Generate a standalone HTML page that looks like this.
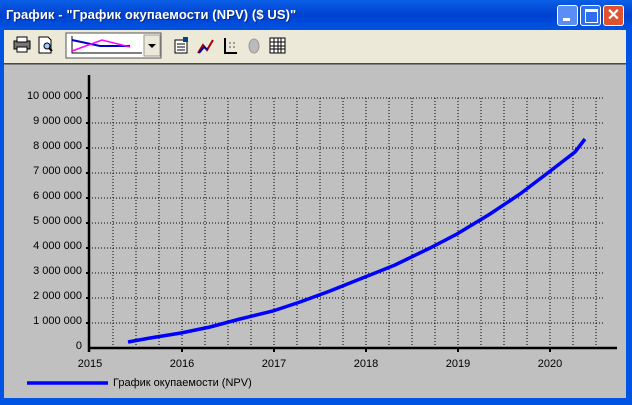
<!DOCTYPE html>
<html><head><meta charset="utf-8"><style>
body{margin:0;width:632px;height:405px;overflow:hidden;font-family:"Liberation Sans",sans-serif;background:#0A246A}
.win{position:absolute;left:0;top:0;width:632px;height:405px;background:linear-gradient(#0A5FE6,#0041D0 15px,#0054E3 30px);}
.title{position:absolute;left:6px;top:7px;color:#fff;font-weight:bold;font-size:13px;text-shadow:1px 1px 0 #0A2A80;letter-spacing:0.1px}
.btn{position:absolute;top:5px;width:21px;height:21px;border:1px solid #fff;border-radius:3px;background:#2E6FF0;box-sizing:border-box}
.tb{position:absolute;left:4px;top:30px;width:622px;height:33px;background:#ECE9D8}
.chart{position:absolute;left:4px;top:64px;width:622px;height:333px;background:#C0C0C0;border-top:1px solid #808080}
.yl{position:absolute;right:550px;font-size:11px;color:#000}
.xl{position:absolute;top:358px;font-size:11px;width:40px;text-align:center;margin-left:-20px}
</style></head><body>
<div class="win">
<div class="title">График - "График окупаемости (NPV) ($ US)"</div>
<div class="btn" style="left:557px;background:#5A8EF5"><div style="position:absolute;left:5px;top:12px;width:7px;height:3px;background:#fff"></div></div>
<div class="btn" style="left:580px"><div style="position:absolute;left:4px;top:3px;width:11px;height:10px;border:1px solid #fff;border-top-width:3px"></div></div>
<div class="btn" style="left:603px;background:#E0522E;color:#fff;font-size:16px;font-weight:bold;text-align:center;line-height:19px">✕</div>
<div class="tb"></div>
<svg width="632" height="64" style="position:absolute;left:0;top:0">
<g transform="translate(1,0)">
<rect x="13" y="41" width="16" height="8" fill="#777" stroke="#000"/><rect x="16" y="37" width="10" height="5" fill="#fff" stroke="#000"/><rect x="16" y="47" width="10" height="5" fill="#fff" stroke="#000"/>
</g>
<path d="M39 37h9l3 3v13h-12z" fill="#fff" stroke="#000"/><circle cx="47" cy="46" r="3" fill="#9cf" stroke="#000"/><path d="M49 48l3 3" stroke="#000" stroke-width="2"/>
<rect x="66" y="33" width="95" height="25" fill="#fff" stroke="#555"/>
<path d="M72 36v17h70" stroke="#000" fill="none"/><path d="M72 40l28 6h30" stroke="#00c" stroke-width="2" fill="none"/><path d="M72 51l30-11 28 7" stroke="#f0f" stroke-width="1.5" fill="none"/>
<rect x="144" y="35" width="16" height="21" fill="#ECE9D8" stroke="#999"/><path d="M148 44h8l-4 4z" fill="#000"/>
<rect x="175" y="40" width="12" height="13" fill="#fff" stroke="#000"/><path d="M177 44h8M177 47h8M177 50h8" stroke="#000"/><rect x="183" y="37" width="5" height="5" fill="#048"/>
<path d="M198 53l5-8 4 5 6-10" stroke="#a00" stroke-width="2" fill="none"/><path d="M199 53l5-6 4 3" stroke="#00a" stroke-width="2" fill="none"/>
<path d="M225 38v15h12" stroke="#000" stroke-width="2" fill="none"/><path d="M229 43h2M233 43h2M229 47h2M233 47h2" stroke="#555"/>
<ellipse cx="254" cy="46" rx="5" ry="7" fill="#bbb" stroke="#999"/>
<rect x="270" y="38" width="15" height="15" fill="#fff" stroke="#000"/><path d="M270 42h15M270 46h15M270 49h15M274 38v15M278 38v15M281 38v15" stroke="#000"/>
</svg>
<div class="chart"></div>
<svg width="632" height="405" style="position:absolute;left:0;top:0">
<g stroke="#000" stroke-dasharray="1,2" stroke-width="1">
<path d="M89 98H604M89 123H604M89 148H604M89 173H604M89 198H604M89 223H604M89 248H604M89 273H604M89 298H604M89 323H604"/>
<path d="M113 98V348M136 98V348M159 98V348M182 98V348M205 98V348M228 98V348M251 98V348M274 98V348M297 98V348M320 98V348M343 98V348M366 98V348M389 98V348M412 98V348M435 98V348M458 98V348M481 98V348M504 98V348M527 98V348M550 98V348M573 98V348M596 98V348"/>
</g>
<path d="M89 75V352M89 348H617" stroke="#000" stroke-width="2.5" fill="none"/>
<g stroke="#000" stroke-width="2"><path d="M86 98h4M86 123h4M86 148h4M86 173h4M86 198h4M86 223h4M86 248h4M86 273h4M86 298h4M86 323h4M182 348v4M274 348v4M366 348v4M458 348v4M550 348v4"/></g>
<path d="M128 342 L150 338 L181 333 L210 327 L240 319 L273 311 L300 302 L330 291 L365 277 L395 265 L430 248 L457 234 L490 214 L520 194 L549 172 L575 152 L585 139" stroke="#0000FF" stroke-width="3.5" fill="none"/>
<path d="M27 383H108" stroke="#0000FF" stroke-width="3.5"/>
</svg>
<div class="yl" style="top:90px">10 000 000</div>
<div class="yl" style="top:115px">9 000 000</div>
<div class="yl" style="top:140px">8 000 000</div>
<div class="yl" style="top:165px">7 000 000</div>
<div class="yl" style="top:190px">6 000 000</div>
<div class="yl" style="top:215px">5 000 000</div>
<div class="yl" style="top:240px">4 000 000</div>
<div class="yl" style="top:265px">3 000 000</div>
<div class="yl" style="top:290px">2 000 000</div>
<div class="yl" style="top:315px">1 000 000</div>
<div class="yl" style="top:340px">0</div>
<div class="xl" style="left:90px">2015</div>
<div class="xl" style="left:182px">2016</div>
<div class="xl" style="left:274px">2017</div>
<div class="xl" style="left:366px">2018</div>
<div class="xl" style="left:458px">2019</div>
<div class="xl" style="left:550px">2020</div>
<div style="position:absolute;left:113px;top:377px;font-size:11px">График окупаемости (NPV)</div>
</div>
</body></html>
